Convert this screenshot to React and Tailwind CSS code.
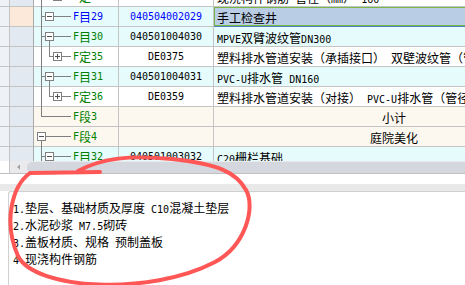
import React from "react";

function Mixed({ text }) {
  const parts = text.match(/[\x00-\x7f]+|[^\x00-\x7f]+/g) || [];
  return (
    <>
      {parts.map((p, i) =>
        /^[\x00-\x7f]+$/.test(p) ? (
          <span key={i} className="font-['DejaVu_Sans_Mono',monospace] text-[10px] whitespace-pre">
            {p}
          </span>
        ) : (
          <span key={i} className="font-['Noto_Sans_CJK_SC',sans-serif] text-[12px] whitespace-pre">
            {p}
          </span>
        )
      )}
    </>
  );
}

function Tree({ level, box, last, anc = [], child }) {
  const c = 7 + 8 * level;
  const g = "#808080";
  return (
    <svg width="84" height="20" className="absolute left-0 top-0" shapeRendering="crispEdges">
      {anc.map((x) => (
        <line key={x} x1={x + 0.5} y1="0" x2={x + 0.5} y2="20" stroke={g} />
      ))}
      {level > 0 && (
        <>
          <line x1={c - 8 + 0.5} y1="0" x2={c - 8 + 0.5} y2={last ? 10 : 20} stroke={g} />
          <line x1={c - 8} y1="9.5" x2={box ? c - 4 : 37} y2="9.5" stroke={g} />
        </>
      )}
      {box && (
        <>
          <rect x={c - 3.5} y="5.5" width="8" height="8" fill="white" stroke={g} />
          <line x1={c - 2} y1="9.5" x2={c + 3} y2="9.5" stroke="#505050" />
          {box === "plus" && <line x1={c + 0.5} y1="7" x2={c + 0.5} y2="12" stroke="#505050" />}
          <line x1={c + 5} y1="9.5" x2="37" y2="9.5" stroke={g} />
        </>
      )}
      {child && <line x1={c + 0.5} y1="14" x2={c + 0.5} y2="20" stroke={g} />}
    </svg>
  );
}

const BG = { mu: "bg-[#e6fcfc]", ding: "bg-white", duan: "bg-[#fdf8ef]" };

const rows = [
  { kind: "ding", label: "F定34", color: "text-[#008000]", code: "DE0359", name: "现浇构件钢筋 管径（mm） 160", tree: { level: 2, box: "plus", anc: [7], last: true } },
  { kind: "mu", label: "F目29", color: "text-[#0000ff]", codeColor: "text-[#0000ff]", code: "040504002029", name: "手工检查井", selected: true, tree: { level: 1, box: "minus" } },
  { kind: "mu", label: "F目30", color: "text-[#008000]", code: "040501004030", name: "MPVE双臂波纹管DN300", tree: { level: 1, box: "minus", child: true } },
  { kind: "ding", label: "F定35", color: "text-[#008000]", code: "DE0375", name: "塑料排水管道安装（承插接口） 双壁波纹管（管径", tree: { level: 2, box: "plus", anc: [7], last: true } },
  { kind: "mu", label: "F目31", color: "text-[#008000]", code: "040501004031", name: "PVC-U排水管 DN160", tree: { level: 1, box: "minus", child: true } },
  { kind: "ding", label: "F定36", color: "text-[#008000]", code: "DE0359", name: "塑料排水管道安装（对接） PVC-U排水管（管径", tree: { level: 2, box: "plus", anc: [7], last: true } },
  { kind: "duan", label: "F段3", color: "text-[#008000]", code: "", name: "小计", center: true, tree: { level: 1, last: true } },
  { kind: "duan", label: "F段4", color: "text-[#008000]", code: "", name: "庭院美化", center: true, tree: { level: 0, box: "minus", child: true } },
  { kind: "mu", label: "F目32", color: "text-[#008000]", code: "040501003032", name: "C20栅栏基础", tree: { level: 1, box: "minus", child: true } },
];

function Row({ r, first }) {
  const bg = BG[r.kind];
  return (
    <div className={`flex h-[20px] shrink-0 ${first ? "-mt-[13px]" : ""}`}>
      <div className="w-[10px] shrink-0 bg-[#eef2f7] border-r border-b border-[#c4c4c4]" />
      <div className={`w-[24px] shrink-0 border-r border-b border-r-[#a9a9a9] border-b-[#c4c4c4] ${r.selected ? "bg-[#fde9d9]" : "bg-[#e3e9f1]"}`} />
      <div className={`relative w-[85px] shrink-0 border-r border-b border-[#c4c4c4] ${bg}`}>
        <Tree {...r.tree} />
        <div className={`absolute left-[39px] top-0 h-[19px] flex items-center leading-none ${r.color}`}>
          <Mixed text={r.label} />
        </div>
      </div>
      <div className={`w-[95px] shrink-0 border-r border-b border-[#c4c4c4] flex items-center justify-center leading-none ${bg} ${r.codeColor || "text-black"}`}>
        <Mixed text={r.code} />
      </div>
      <div
        className={`relative w-[360px] shrink-0 border-b border-[#c4c4c4] flex items-center leading-none text-black overflow-hidden ${
          r.center ? "justify-center" : "pl-[3px]"
        } ${r.selected ? "bg-[#b9cde5] border-b-[#4f81bd]" : bg}`}
      >
        {r.selected && <div className="absolute inset-x-0 top-0 bottom-0 border border-[#7ab648]" />}
        <span className="whitespace-nowrap relative">
          <Mixed text={r.name} />
        </span>
      </div>
    </div>
  );
}

export default function App() {
  return (
    <div className="relative w-[465px] h-[285px] overflow-hidden bg-white">
      <div className="flex flex-col">
        <div className="h-[161px] overflow-hidden flex flex-col">
          {rows.map((r, i) => (
            <Row key={i} r={r} first={i === 0} />
          ))}
        </div>
        <div className="flex h-[13px] border-b border-[#c0c0c0]">
          <div className="w-[10px] shrink-0 bg-white border-r border-[#c4c4c4]" />
          <div className="flex-1 flex items-center bg-[#eaeaec] pl-[6px]">
            <svg width="11" height="12" className="shrink-0">
              <path d="M1 6 L4 3.5 L4 8.5 Z" fill="#a0a0a0" />
            </svg>
            <div className="flex-1 h-[11px] rounded-l-[5px] bg-[#d4d7de]" />
          </div>
        </div>
        <div className="h-[10px]" />
        <div className="h-[7px] bg-[#e9e9e9]" />
        <div className="ml-[8px] h-[200px] border-l border-t border-[#d0d0d0] rounded-tl-[3px] pt-[8px] pl-[4px]">
          <div className="flex flex-col leading-[14px] text-black">
            <div><Mixed text="1.垫层、基础材质及厚度 C10混凝土垫层" /></div>
            <div><Mixed text="2.水泥砂浆 M7.5砌砖" /></div>
            <div><Mixed text="3.盖板材质、规格 预制盖板" /></div>
            <div><Mixed text="4.现浇构件钢筋" /></div>
          </div>
        </div>
      </div>
      <svg className="absolute inset-0 pointer-events-none" width="465" height="285">
        <path
          d="M 100 172 L 30 173 C 12 186 3 222 18 256 C 35 290 150 296 215 262 C 245 246 256 208 246 190 C 236 172 218 164 172 159 C 130 155 102 158 78 171"
          fill="none"
          stroke="#ff5656"
          strokeWidth="4"
          strokeLinecap="round"
          strokeLinejoin="round"
        />
      </svg>
    </div>
  );
}
